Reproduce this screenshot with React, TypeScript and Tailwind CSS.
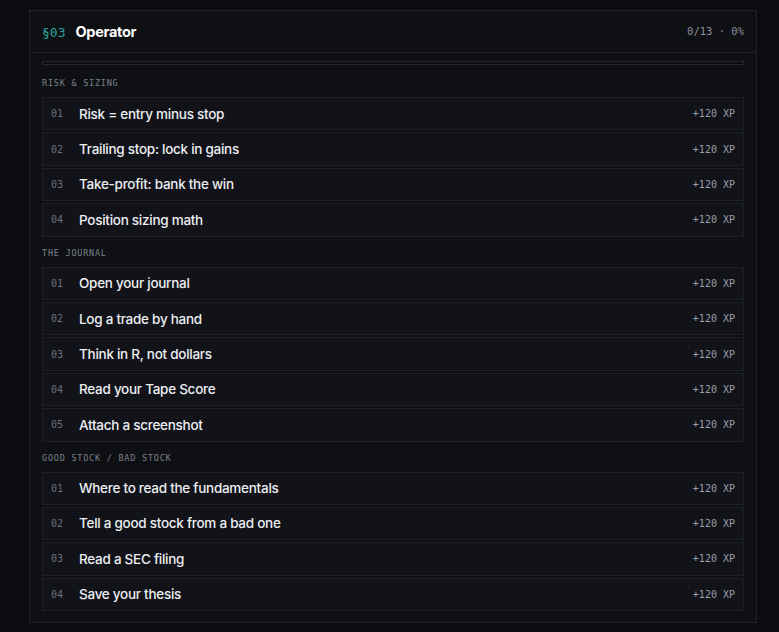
const mono = "font-['DejaVu_Sans_Mono','Liberation_Mono',monospace]"
const sans = "font-['Inter','Liberation_Sans',sans-serif]"

type Section = { label: string; lessons: string[] }

const sections: Section[] = [
  {
    label: 'RISK & SIZING',
    lessons: ['Risk = entry minus stop', 'Trailing stop: lock in gains', 'Take-profit: bank the win', 'Position sizing math'],
  },
  {
    label: 'THE JOURNAL',
    lessons: ['Open your journal', 'Log a trade by hand', 'Think in R, not dollars', 'Read your Tape Score', 'Attach a screenshot'],
  },
  {
    label: 'GOOD STOCK / BAD STOCK',
    lessons: [
      'Where to read the fundamentals',
      'Tell a good stock from a bad one',
      'Read a SEC filing',
      'Save your thesis',
    ],
  },
]

function LessonRow({ n, title }: { n: number; title: string }) {
  return (
    <li className="flex h-[33.4px] items-center border border-[#1d2027] bg-[#111319] pl-[8px] pr-[8px]">
      <span className={`${mono} w-[28px] text-[10px] text-[#6b7079]`}>{String(n).padStart(2, '0')}</span>
      <span className={`${sans} flex-1 text-[13.5px] font-medium tracking-[-0.02em] text-[#eceef2]`}>{title}</span>
      <span className={`${mono} text-[10px] text-[#9a9ea6]`}>+120 XP</span>
    </li>
  )
}

export default function App() {
  return (
    <div className="min-h-[632px] bg-[#0b0c0f] pt-[10px] pl-[29px] pr-[22px]">
      <section className="border border-[#1f2228] bg-[#0e1014]">
        <header className="flex h-[42px] items-center justify-between border-b border-[#1f2228] px-3">
          <div className="flex items-baseline gap-[10px]">
            <span className={`${mono} text-[13px] text-[#2ba597]`}>§03</span>
            <span className={`${sans} text-[14.5px] font-bold tracking-[-0.02em] text-white`}>Operator</span>
          </div>
          <span className={`${mono} text-[10.5px] text-[#8d9199]`}>0/13 · 0%</span>
        </header>

        <div className="px-3 pt-[8px] pb-[11px]">
          <div className="h-[4px] border border-[#23262d] bg-[#0c0e12]" />

          {sections.map((s, i) => (
            <div key={s.label}>
              <h3
                className={`${mono} ${i === 0 ? 'mt-[11px]' : 'mt-[9px]'} mb-[7px] h-[14px] text-[8.5px] leading-[14px] tracking-[0.09em] text-[#7e828b]`}
              >
                {s.label}
              </h3>
              <ul className="flex flex-col gap-[2px]">
                {s.lessons.map((t, j) => (
                  <LessonRow key={t} n={j + 1} title={t} />
                ))}
              </ul>
            </div>
          ))}
        </div>
      </section>
    </div>
  )
}
